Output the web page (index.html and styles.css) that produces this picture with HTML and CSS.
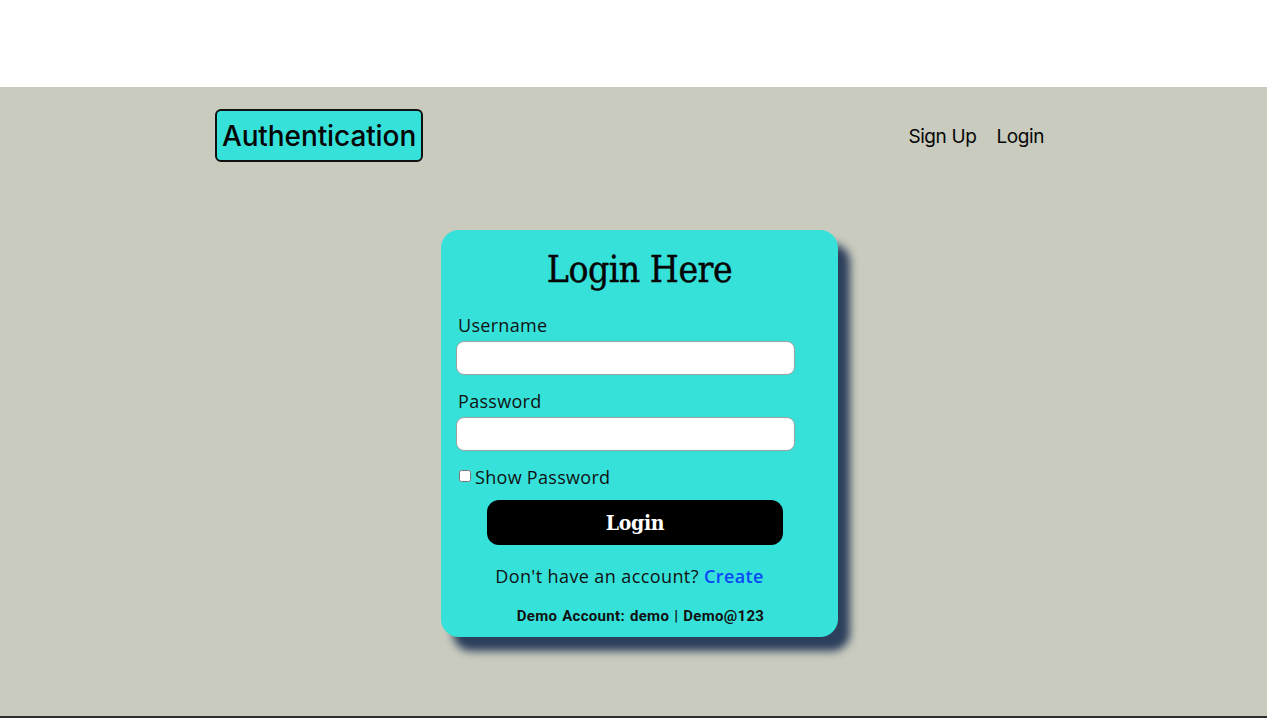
FILE: index.html
```html
<!DOCTYPE html>
<html>
<head>
<meta charset="utf-8">
<link rel="stylesheet" href="styles.css">
</head>
<body>
<div class="topbar"></div>
<main class="page">
  <header class="header">
    <div class="logo">Authentication</div>
    <nav class="nav">
      <a href="#">Sign Up</a>
      <a href="#">Login</a>
    </nav>
  </header>
  <section class="card">
    <h1 class="title">Login Here</h1>
    <label class="label">Username</label>
    <input class="field" type="text">
    <label class="label">Password</label>
    <input class="field" type="password">
    <div class="show">
      <input type="checkbox" class="check">
      <span>Show Password</span>
    </div>
    <button class="btn">Login</button>
    <p class="account">Don't have an account? <a href="#">Create</a></p>
    <p class="demo">Demo Account: demo | Demo@123</p>
  </section>
</main>
</body>
</html>
```
FILE: styles.css
```css
html, body {
  margin: 0;
  padding: 0;
  background: #ffffff;
}
body {
  font-family: "Open Sans", "Noto Sans", sans-serif;
  width: 1280px;
  height: 720px;
  overflow: hidden;
}
.topbar {
  height: 87px;
  background: #ffffff;
}
.page {
  width: 1267px;
  height: 631px;
  background: #c9cbbe;
  border-bottom: 2px solid #2b2f2c;
  box-sizing: border-box;
  display: flex;
  flex-direction: column;
  align-items: center;
}
.header {
  align-self: stretch;
  display: flex;
  justify-content: space-between;
  align-items: center;
  padding: 22px 223px 0 215px;
}
.logo {
  width: 208px;
  height: 53px;
  box-sizing: border-box;
  border: 2px solid #111;
  border-radius: 6px;
  background: #36e1da;
  display: flex;
  align-items: center;
  justify-content: center;
  padding-top: 1px;
  font-family: "Inter", sans-serif;
  font-weight: 500;
  font-size: 28px;
  letter-spacing: -0.1px;
  color: #050505;
}
.nav {
  display: flex;
  gap: 20px;
  padding-top: 2px;
}
.nav a {
  color: #050505;
  text-decoration: none;
  font-family: "Inter", sans-serif;
  font-size: 19px;
  letter-spacing: -0.4px;
}
.card {
  margin-top: 68px;
  margin-left: 12px;
  width: 397px;
  height: 407px;
  box-sizing: border-box;
  background: #36e1da;
  border-radius: 18px;
  box-shadow: 12px 14px 8px #2c3f5c;
  padding: 12px 15px 0 15px;
  display: flex;
  flex-direction: column;
}
.title {
  margin: 0;
  text-align: center;
  font-family: "DejaVu Serif", "Liberation Serif", serif;
  font-stretch: condensed;
  font-weight: 400;
  font-size: 37px;
  line-height: 56px;
  color: #050505;
  letter-spacing: -0.5px;
  -webkit-text-stroke: 0.4px #050505;
}
.label {
  font-size: 18px;
  letter-spacing: 0.3px;
  color: #111;
  margin: 15px 0 0 2px;
  line-height: 24px;
}
.label + .field {
  margin-top: 4px;
}
.field {
  width: 339px;
  height: 34px;
  box-sizing: border-box;
  border: 1px solid #9aa3a2;
  border-radius: 8px;
  background: #fff;
  margin: 0;
}
.field + .label {
  margin-top: 14px;
}
.show {
  display: flex;
  align-items: center;
  margin-top: 14px;
  margin-left: 3px;
  font-size: 18px;
  letter-spacing: 0.3px;
  color: #111;
  line-height: 24px;
}
.check {
  width: 12px;
  height: 12px;
  margin: 0 4px 2px 0;
}
.btn {
  align-self: flex-start;
  margin: 11px 0 0 31px;
  width: 296px;
  height: 45px;
  border: none;
  border-radius: 12px;
  background: #000;
  color: #fff;
  font-family: "DejaVu Serif", "Liberation Serif", serif;
  font-stretch: condensed;
  font-weight: 700;
  font-size: 21px;
  letter-spacing: -0.3px;
}
.account {
  margin: 19px 0 0 0;
  text-align: center;
  font-size: 18px;
  letter-spacing: 0.4px;
  color: #111;
  line-height: 24px;
  padding-right: 20px;
}
.account a {
  color: #0a47f7;
  text-decoration: none;
  font-weight: 600;
}
.demo {
  margin: 19px 0 0 0;
  line-height: 18px;
  text-align: center;
  font-family: "Roboto", sans-serif;
  font-weight: 700;
  font-size: 15px;
  letter-spacing: 0.3px;
  word-spacing: 1px;
  color: #111;
  padding-left: 2px;
}
```
